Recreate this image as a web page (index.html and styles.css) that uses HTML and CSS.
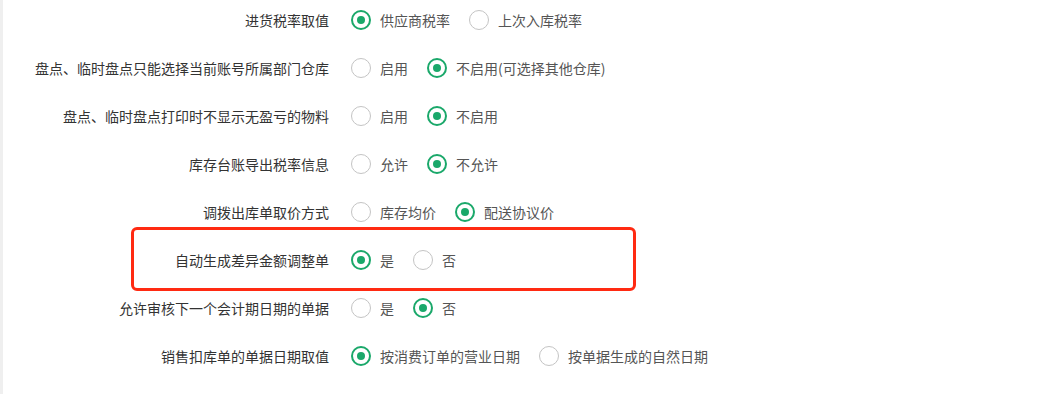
FILE: index.html
```html
<!DOCTYPE html>
<html lang="zh-CN">
<head>
<meta charset="utf-8">
<title>设置</title>
<link rel="stylesheet" href="styles.css">
</head>
<body>
<div class="page">
  <aside class="side"></aside>
  <main class="form">
    <div class="row">
      <div class="label">进货税率取值</div>
      <div class="opts">
        <label class="opt checked"><span class="radio"></span>供应商税率</label>
        <label class="opt"><span class="radio"></span>上次入库税率</label>
      </div>
    </div>
    <div class="row">
      <div class="label">盘点、临时盘点只能选择当前账号所属部门仓库</div>
      <div class="opts">
        <label class="opt"><span class="radio"></span>启用</label>
        <label class="opt checked"><span class="radio"></span>不启用(可选择其他仓库)</label>
      </div>
    </div>
    <div class="row">
      <div class="label">盘点、临时盘点打印时不显示无盈亏的物料</div>
      <div class="opts">
        <label class="opt"><span class="radio"></span>启用</label>
        <label class="opt checked"><span class="radio"></span>不启用</label>
      </div>
    </div>
    <div class="row">
      <div class="label">库存台账导出税率信息</div>
      <div class="opts">
        <label class="opt"><span class="radio"></span>允许</label>
        <label class="opt checked"><span class="radio"></span>不允许</label>
      </div>
    </div>
    <div class="row">
      <div class="label">调拨出库单取价方式</div>
      <div class="opts">
        <label class="opt"><span class="radio"></span>库存均价</label>
        <label class="opt checked"><span class="radio"></span>配送协议价</label>
      </div>
    </div>
    <div class="row highlight">
      <div class="label">自动生成差异金额调整单</div>
      <div class="opts">
        <label class="opt checked"><span class="radio"></span>是</label>
        <label class="opt"><span class="radio"></span>否</label>
      </div>
    </div>
    <div class="row">
      <div class="label">允许审核下一个会计期日期的单据</div>
      <div class="opts">
        <label class="opt"><span class="radio"></span>是</label>
        <label class="opt checked"><span class="radio"></span>否</label>
      </div>
    </div>
    <div class="row">
      <div class="label">销售扣库单的单据日期取值</div>
      <div class="opts">
        <label class="opt checked"><span class="radio"></span>按消费订单的营业日期</label>
        <label class="opt"><span class="radio"></span>按单据生成的自然日期</label>
      </div>
    </div>
  </main>
</div>
</body>
</html>
```

FILE: styles.css
```css
* { box-sizing: border-box; }
html, body { margin: 0; padding: 0; background: #fff; }
body {
  font-family: "Noto Sans CJK SC", "Liberation Sans", sans-serif;
  font-size: 14px;
  width: 1040px;
  height: 394px;
  overflow: hidden;
}
.page {
  display: flex;
  height: 394px;
}
.side {
  width: 3px;
  background: #efefef;
  flex: none;
}
.form {
  flex: 1;
  padding-top: 4px;
  display: flex;
  flex-direction: column;
  gap: 16px;
  height: 388px;
}
.row {
  display: flex;
  align-items: center;
  height: 32px;
  position: relative;
}
.label {
  width: 326px;
  text-align: right;
  color: #333;
  line-height: 20px;
  white-space: nowrap;
  flex: none;
}
.opts {
  display: flex;
  align-items: center;
  margin-left: 22px;
}
.opt {
  display: flex;
  align-items: center;
  color: #555;
  margin-right: 19px;
  line-height: 20px;
  white-space: nowrap;
}
.radio {
  width: 20px;
  height: 20px;
  border: 1.5px solid #c4c4c4;
  border-radius: 50%;
  margin-right: 9px;
  display: flex;
  align-items: center;
  justify-content: center;
  flex: none;
}
.opt.checked .radio {
  border: 2px solid #1aa86a;
}
.opt.checked .radio::after {
  content: "";
  width: 8px;
  height: 8px;
  border-radius: 50%;
  background: #1aa86a;
}
.highlight::after {
  content: "";
  position: absolute;
  left: 128px;
  top: -17px;
  width: 499px;
  height: 58px;
  border: 3px solid #ff2a12;
  border-radius: 6px;
  pointer-events: none;
}
```
